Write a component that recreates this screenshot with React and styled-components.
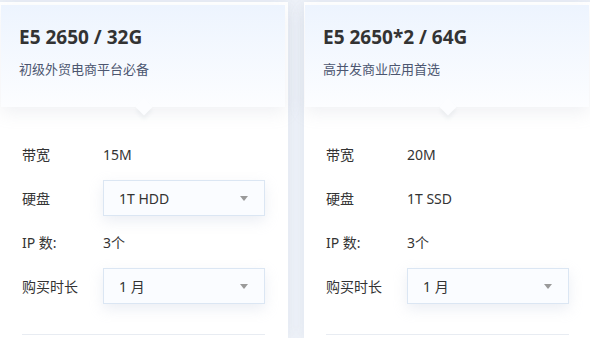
import styled, { createGlobalStyle } from "styled-components";

const GlobalStyle = createGlobalStyle`
  html, body {
    margin: 0;
    padding: 0;
    background: #eef2f8;
    font-family: "Noto Sans", "Noto Sans CJK SC", sans-serif;
    overflow: hidden;
  }
`;

const plans = [
  {
    title: "E5 2650 / 32G",
    desc: "初级外贸电商平台必备",
    bandwidth: "15M",
    disk: "1T HDD",
    diskSelect: true,
    ips: "3个",
    period: "1 月",
  },
  {
    title: "E5 2650*2 / 64G",
    desc: "高并发商业应用首选",
    bandwidth: "20M",
    disk: "1T SSD",
    diskSelect: false,
    ips: "3个",
    period: "1 月",
  },
];

function Select({ value }) {
  return (
    <SelectBox>
      <span>{value}</span>
      <Caret />
    </SelectBox>
  );
}

export default function App() {
  return (
    <>
      <GlobalStyle />
      <Page>
        {plans.map((p) => (
          <Card key={p.title}>
            <Header>
              <Title>{p.title}</Title>
              <Desc>{p.desc}</Desc>
              <Pointer />
            </Header>
            <Body>
              <Row>
                <Label>带宽</Label>
                <Value>{p.bandwidth}</Value>
              </Row>
              <Row>
                <Label>硬盘</Label>
                {p.diskSelect ? <Select value={p.disk} /> : <Value>{p.disk}</Value>}
              </Row>
              <Row>
                <Label>IP 数:</Label>
                <Value>{p.ips}</Value>
              </Row>
              <Row>
                <Label>购买时长</Label>
                <Select value={p.period} />
              </Row>
              <Divider />
            </Body>
          </Card>
        ))}
      </Page>
    </>
  );
}

const Page = styled.div`
  display: flex;
  gap: 16px;
  padding-top: 2px;
  height: 336px;
  width: 590px;
  overflow: hidden;
`;

const Card = styled.div`
  width: 288px;
  flex-shrink: 0;
  background: #fff;
  padding: 3px 3px 0 1px;
  box-sizing: border-box;
  box-shadow: 0 0 12px rgba(200, 210, 225, 0.35);
  display: flex;
  flex-direction: column;
`;

const Header = styled.div`
  position: relative;
  height: 102px;
  padding: 19px 0 0 18px;
  box-sizing: border-box;
  background: linear-gradient(180deg, #edf4fe 0%, #fcfdff 100%);
  box-shadow: 0 6px 16px rgba(160, 170, 185, 0.16);
  z-index: 1;
`;

const Title = styled.div`
  font-size: 19px;
  font-weight: 700;
  color: #333;
  line-height: 26px;
`;

const Desc = styled.div`
  margin-top: 10px;
  font-size: 13px;
  color: #4c5670;
  line-height: 18px;
`;

const Pointer = styled.div`
  position: absolute;
  left: 137px;
  bottom: -6px;
  width: 12px;
  height: 12px;
  background: #fcfdff;
  transform: rotate(45deg);
  box-shadow: 3px 3px 4px rgba(160, 170, 185, 0.12);
`;

const Body = styled.div`
  flex: 1;
  display: flex;
  flex-direction: column;
  gap: 8px;
  padding: 29px 20px 0 21px;
`;

const Row = styled.div`
  display: flex;
  align-items: center;
  height: 36px;
`;

const Label = styled.div`
  width: 81px;
  flex-shrink: 0;
  font-size: 14px;
  color: #333;
`;

const Value = styled.div`
  font-size: 14px;
  color: #333;
`;

const SelectBox = styled.div`
  width: 163px;
  height: 36px;
  box-sizing: border-box;
  border: 1px solid #dbe6f3;
  background: #fafcff;
  box-shadow: 0 5px 14px rgba(190, 200, 220, 0.3);
  display: flex;
  align-items: center;
  justify-content: space-between;
  padding: 0 16px 0 15px;
  font-size: 14px;
  color: #333;
`;

const Caret = styled.span`
  width: 0;
  height: 0;
  border-left: 4px solid transparent;
  border-right: 4px solid transparent;
  border-top: 5px solid #9a9a9a;
`;

const Divider = styled.div`
  margin-top: 22px;
  height: 1px;
  width: 243px;
  background: #e8ecf2;
`;
